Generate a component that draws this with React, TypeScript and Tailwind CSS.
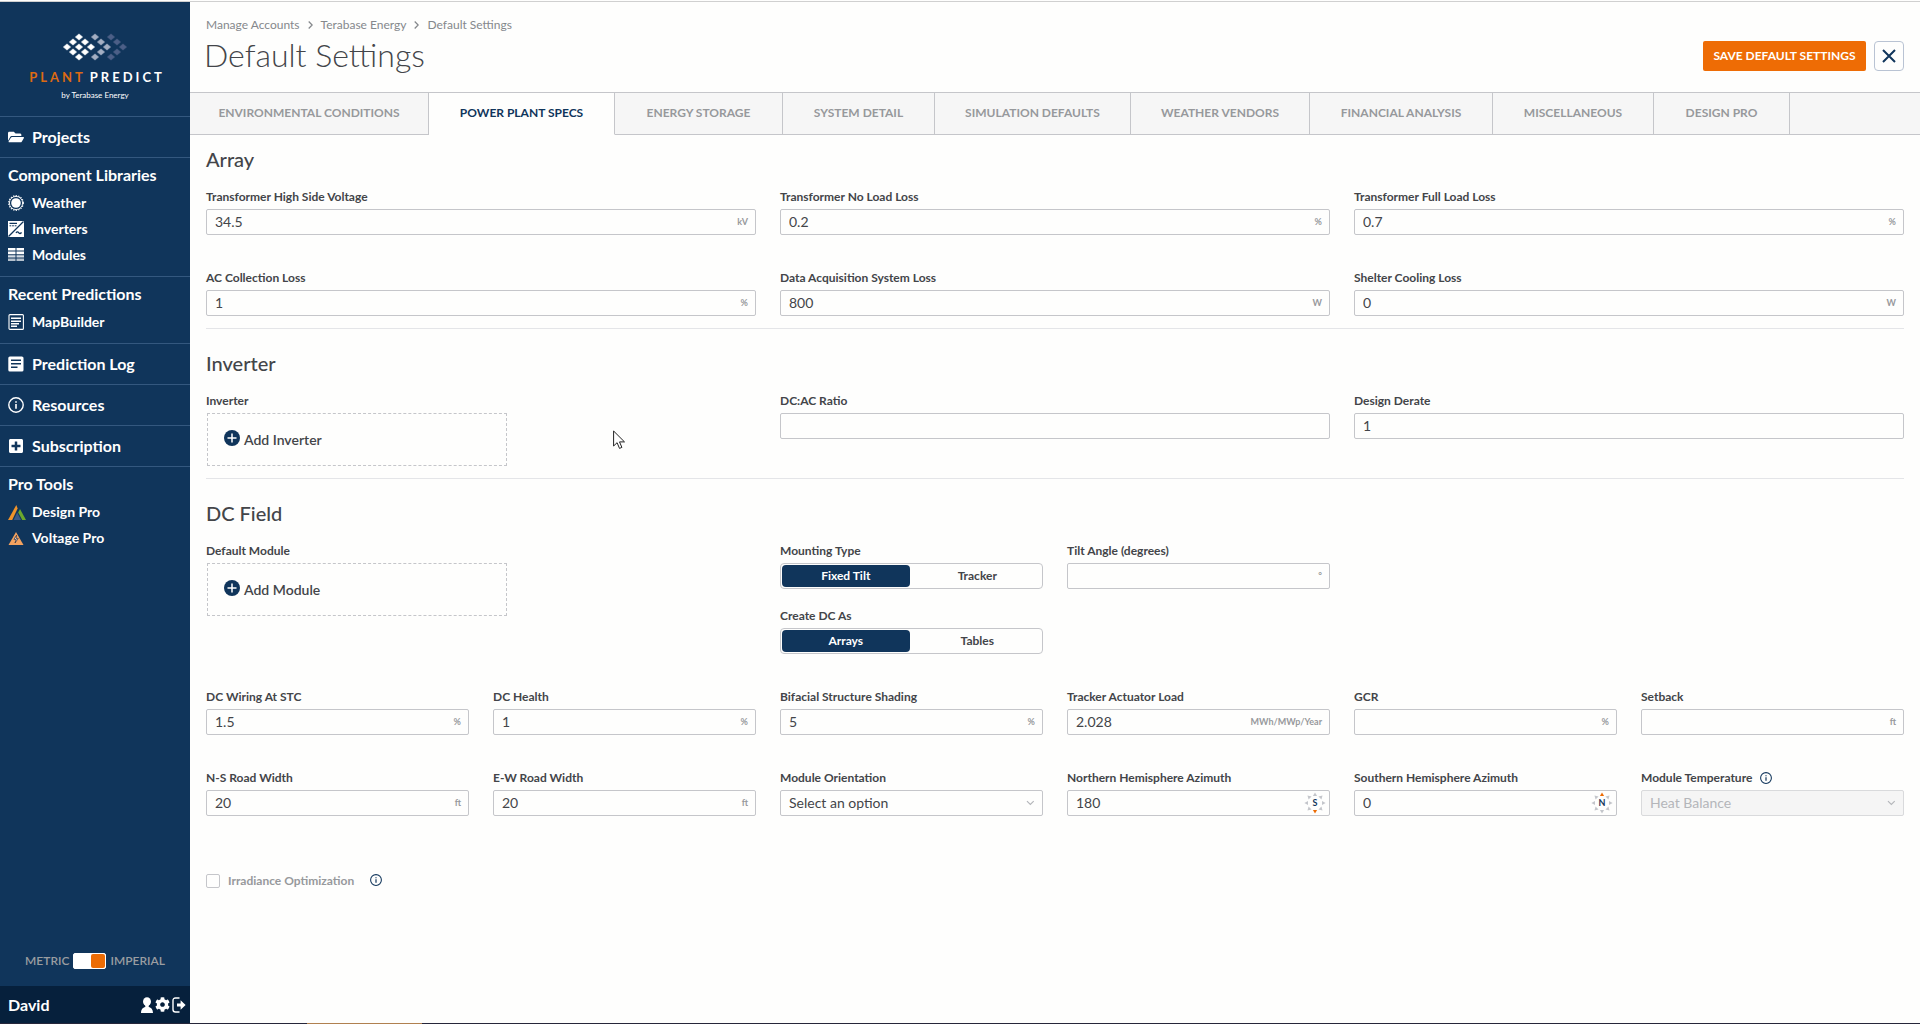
import { useId, useState } from 'react';
import type { ReactNode } from 'react';
import { FaCog, FaFolderOpen, FaPlusSquare } from 'react-icons/fa';

const Logo = () => {
  const white = [[15, 0], [9, 5], [21, 5], [3, 10], [15, 10], [27, 10], [9, 15], [21, 15], [15, 20]];
  const light = [[31, 0], [37, 5], [43, 10], [37, 15], [31, 20]];
  const dim = [[47, 0], [53, 5], [59, 10], [53, 15], [47, 20]];
  const diamond = ([x, y]: number[]) => (
    <path key={`${x}-${y}`} d={`M${x - 3.6} ${y + 4}l3.6 -3.1l3.6 3.1l-3.6 3.1z`} strokeWidth="0.6" strokeLinejoin="round" />
  );
  return (
    <svg width="64" height="28" viewBox="-1 0 64 28" aria-hidden="true">
      <g fill="#4c5f87" stroke="#4c5f87">{dim.map(diamond)}</g>
      <g fill="#a3aec2" stroke="#a3aec2">{light.map(diamond)}</g>
      <g fill="#fff" stroke="#fff">{white.map(diamond)}</g>
    </svg>
  );
};

const WeatherIcon = () => (
  <svg width="16" height="16" viewBox="0 0 16 16" fill="none" stroke="white" aria-hidden="true">
    <circle cx="8" cy="8" r="4.8" fill="white" stroke="none" />
    <circle cx="8" cy="8" r="6.6" strokeWidth="0.9" />
    <circle cx="8" cy="8" r="7.3" strokeWidth="1.2" strokeDasharray="1.3 1.3" />
  </svg>
);

const InverterIcon = () => (
  <svg width="16" height="16" viewBox="0 0 16 16" aria-hidden="true">
    <rect width="16" height="16" fill="white" />
    <path d="M0.5 15.5L15.5 0.5M1.5 2.3h7.5M8 12c1-1.6 2-1.2 2.8-.2s2 1 2.7-.4" stroke="#10355b" strokeWidth="1.3" fill="none" />
    <path d="M1.5 4.8h7" stroke="#10355b" strokeDasharray="1.8 0.8" />
  </svg>
);

const ModulesIcon = () => (
  <svg width="16" height="14" viewBox="0 0 16 14" aria-hidden="true">
    <path d="M0 0h7.5v2.6H0zM8.5 0H16v2.6H8.5zM0 3.6h7.5v2.6H0zM8.5 3.6H16v2.6H8.5z" fill="white" />
    <path d="M0 7.2h7.5v2.4H0zM8.5 7.2H16v2.4H8.5z" fill="#d5dde5" />
    <path d="M0 10.6h7.5V13H0zM8.5 10.6H16V13H8.5z" fill="#b5c1cd" />
  </svg>
);

const PredictionIcon = () => (
  <svg width="16" height="16" viewBox="0 0 16 16" fill="none" stroke="white" aria-hidden="true">
    <rect x="1" y="0.6" width="14.4" height="14.8" rx="1" strokeWidth="1.1" />
    <path d="M3 4.2h10M3 7.2h10M3 9.8h8M3 12.2h6" strokeWidth="1.5" />
  </svg>
);

const LogIcon = () => (
  <svg width="16" height="16" viewBox="0 0 16 16" aria-hidden="true">
    <rect x="0.3" y="0.5" width="15.2" height="15" rx="1.6" fill="white" />
    <path d="M3 4.3h10M3 7.7h10M3 11.2h6.5" stroke="#10355b" strokeWidth="1.6" />
  </svg>
);

const InfoIcon = ({ className }: { className: string }) => (
  <svg viewBox="0 0 16 16" fill="none" stroke="currentColor" className={className} aria-hidden="true">
    <circle cx="8" cy="8" r="7.2" strokeWidth="1.4" />
    <path d="M8 7v4.8M8 4.2v1.6" strokeWidth="1.6" />
  </svg>
);

const DesignProIcon = () => (
  <svg width="18" height="15" viewBox="0 0 18 15" aria-hidden="true">
    <path d="M8.3 0L9.6 3.6L4.2 15H0z" fill="#f0932b" />
    <path d="M12 4l6 11h-3.8L10.2 7.5z" fill="#6ba82d" />
    <path d="M9.2 7.4L13 15H5.6z" fill="#3a5a86" />
  </svg>
);

const VoltageProIcon = () => (
  <svg width="16" height="13" viewBox="0 0 16 13" aria-hidden="true">
    <path d="M8 0L15.5 13H0.5z" fill="#f3a25f" />
    <path d="M8.6 3.2L6 7.4h2.2L7 11l3.2-4.6H8z" fill="#fff" stroke="#3d3a45" strokeWidth="0.8" />
  </svg>
);

const UserIcon = () => (
  <svg width="12" height="16" viewBox="0 0 12 16" fill="white" aria-hidden="true">
    <ellipse cx="6" cy="4.6" rx="4" ry="4.4" />
    <path d="M4.3 8h3.4v2C10.3 10.8 11.8 12.2 12 16H0c.2-3.8 1.7-5.2 4.3-6z" />
  </svg>
);

const SignOutIcon = () => (
  <svg width="14" height="16" viewBox="0 0 14 16" aria-hidden="true">
    <path d="M7.5 1H3.5Q1 1 1 3.5v9Q1 15 3.5 15h4" fill="none" stroke="white" strokeWidth="1.4" />
    <path d="M5 6.4h3.6V3.2L13.6 8l-5 4.8V9.6H5z" fill="white" />
  </svg>
);

const PlusIcon = () => (
  <svg width="16" height="16" viewBox="0 0 16 16" aria-hidden="true" className="mb-1">
    <circle cx="8" cy="8" r="8" fill="#10355b" />
    <path d="M8 3.5v9M3.5 8h9" stroke="white" strokeWidth="1.5" />
  </svg>
);

const Compass = ({ point }: { point: 'N' | 'S' }) => (
  <svg width="22" height="22" viewBox="0 0 22 22" className="-mr-1" aria-hidden="true">
    {[0, 45, 90, 135, 180, 225, 270, 315].map((deg) => (
      <path
        key={deg}
        d="M11 0.4l2.1 3.6H8.9z"
        fill={deg === (point === 'N' ? 0 : 180) ? '#ec6c05' : '#c4c6cb'}
        transform={`rotate(${deg} 11 11)`}
      />
    ))}
    <text x="11" y="14" textAnchor="middle" fontSize="9" fontWeight="700" fill="#10355b">{point}</text>
  </svg>
);

const Chevron = () => (
  <svg width="9" height="6" viewBox="0 0 9 6" fill="none" stroke="#b4b6ba" strokeWidth="1.2" aria-hidden="true">
    <path d="M1 1l3.5 3.5L8 1" />
  </svg>
);

const Crumb = () => (
  <svg width="5" height="8" viewBox="0 0 5 8" fill="none" stroke="currentColor" strokeWidth="1.3" aria-hidden="true">
    <path d="M0.7 0.5L4.2 4L0.7 7.5" />
  </svg>
);

const SidebarLink = ({ icon, children }: { icon: ReactNode; children: ReactNode }) => (
  <li>
    <a href="#" className="flex h-[26px] items-center text-sm font-bold">
      <span className="flex w-6 shrink-0">{icon}</span>
      {children}
    </a>
  </li>
);

const SidebarMain = ({ icon, children }: { icon: ReactNode; children: ReactNode }) => (
  <a href="#" className="flex h-[41px] items-center border-t border-[#34587f] px-2 text-base font-bold">
    <span className="flex w-6 shrink-0">{icon}</span>
    {children}
  </a>
);

const SidebarGroup = ({ title, children }: { title: string; children: ReactNode }) => (
  <section className="border-t border-[#34587f] px-2 pt-[7px] pb-2">
    <h2 className="h-[25px] text-base leading-5 font-bold">{title}</h2>
    <ul>{children}</ul>
  </section>
);

const Sidebar = () => {
  const [imperial, setImperial] = useState(true);
  return (
    <aside className="flex w-[190px] shrink-0 flex-col bg-[#10355b] text-white">
      <div className="flex h-[114px] flex-col items-center pt-[31px]">
        <Logo />
        <p className="mt-1.5 flex gap-1 text-[13px] leading-5 font-bold tracking-[3px]">
          <span className="text-[#dd6a12]">PLANT</span>
          <span className="-mr-1">PREDICT</span>
        </p>
        <p className="mt-0.5 text-[8px] leading-3">by Terabase Energy</p>
      </div>
      <nav aria-label="Main">
        <SidebarMain icon={<FaFolderOpen size={16} />}>Projects</SidebarMain>
        <SidebarGroup title="Component Libraries">
          <SidebarLink icon={<WeatherIcon />}>Weather</SidebarLink>
          <SidebarLink icon={<InverterIcon />}>Inverters</SidebarLink>
          <SidebarLink icon={<ModulesIcon />}>Modules</SidebarLink>
        </SidebarGroup>
        <SidebarGroup title="Recent Predictions">
          <SidebarLink icon={<PredictionIcon />}>MapBuilder</SidebarLink>
        </SidebarGroup>
        <SidebarMain icon={<LogIcon />}>Prediction Log</SidebarMain>
        <SidebarMain icon={<InfoIcon className="size-4" />}>Resources</SidebarMain>
        <SidebarMain icon={<FaPlusSquare size={16} />}>Subscription</SidebarMain>
        <SidebarGroup title="Pro Tools">
          <SidebarLink icon={<DesignProIcon />}>Design Pro</SidebarLink>
          <SidebarLink icon={<VoltageProIcon />}>Voltage Pro</SidebarLink>
        </SidebarGroup>
      </nav>
      <label className="mt-auto flex h-[50px] items-center justify-center gap-1 text-xs font-semibold text-[#9a9da1]">
        METRIC
        <input
          type="checkbox"
          role="switch"
          aria-label="Use imperial units"
          checked={imperial}
          onChange={(e) => setImperial(e.target.checked)}
          className="h-4 w-[33px] appearance-none rounded-xs border border-white bg-white before:block before:size-[14px] before:rounded-xs before:bg-[#ec6c05] checked:before:ml-[17px]"
        />
        IMPERIAL
      </label>
      <div className="flex h-[37px] items-center bg-[#06203c] px-2 text-base font-bold">
        <span className="flex-1">David</span>
        <div className="-mr-1 flex items-center gap-0.5">
          <button aria-label="Profile"><UserIcon /></button>
          <button aria-label="Settings"><FaCog size={15} /></button>
          <button aria-label="Sign out"><SignOutIcon /></button>
        </div>
      </div>
    </aside>
  );
};

const tabs = [
  { name: 'ENVIRONMENTAL CONDITIONS', width: 'w-[239px]' },
  { name: 'POWER PLANT SPECS', width: 'w-[186px]' },
  { name: 'ENERGY STORAGE', width: 'w-[168px]' },
  { name: 'SYSTEM DETAIL', width: 'w-[152px]' },
  { name: 'SIMULATION DEFAULTS', width: 'w-[196px]' },
  { name: 'WEATHER VENDORS', width: 'w-[179px]' },
  { name: 'FINANCIAL ANALYSIS', width: 'w-[183px]' },
  { name: 'MISCELLANEOUS', width: 'w-[161px]' },
  { name: 'DESIGN PRO', width: 'w-[136px]' },
];

const Tabs = () => {
  const [active, setActive] = useState('POWER PLANT SPECS');
  return (
    <div role="tablist" className="flex h-[43px] border-t border-[#c5c6ca] bg-[#f6f6f6]">
      {tabs.map(({ name, width }) => (
        <button
          key={name}
          role="tab"
          aria-selected={name === active}
          onClick={() => setActive(name)}
          className={`${width} border-r border-b border-r-[#c5c6ca] pb-0.5 text-xs font-bold whitespace-nowrap ${
            name === active ? 'border-b-[#fefefd] bg-[#fefefd] text-[#10355b]' : 'border-b-[#c5c6ca] text-[#97999c]'
          }`}
        >
          {name}
        </button>
      ))}
      <div className="flex-1 border-b border-[#c5c6ca]" />
    </div>
  );
};

type FieldProps = { label: string; value?: string; unit?: ReactNode };

const Field = ({ label, value = '', unit }: FieldProps) => {
  const id = useId();
  return (
    <div>
      <label htmlFor={id} className="block text-xs leading-6 font-bold">{label}</label>
      <div className="flex h-[26px] items-center rounded-xs border border-[#c5c6ca] pr-[7px] pl-2">
        <input id={id} defaultValue={value} className="w-full min-w-0 bg-transparent text-sm outline-none" />
        <span className="shrink-0 text-[9px] font-bold text-[#97999c]">{unit}</span>
      </div>
    </div>
  );
};

const SelectField = ({ label, option, info, disabled }: { label: string; option: string; info?: boolean; disabled?: boolean }) => {
  const id = useId();
  return (
    <div>
      <div className="flex items-center gap-2">
        <label htmlFor={id} className="text-xs leading-6 font-bold">{label}</label>
        {info && <InfoIcon className="size-3 text-[#10355b]" />}
      </div>
      <div className={`flex h-[26px] items-center rounded-xs border pr-[7px] pl-2 ${disabled ? 'border-[#d9dadc] bg-[#f5f5f5]' : 'border-[#c5c6ca]'}`}>
        <select id={id} disabled={disabled} className="w-full appearance-none bg-transparent text-sm outline-none disabled:text-[#b4b6ba]">
          <option>{option}</option>
        </select>
        <Chevron />
      </div>
    </div>
  );
};

const Toggle = ({ label, options }: { label: string; options: string[] }) => {
  const name = useId();
  return (
    <fieldset>
      <legend className="text-xs leading-6 font-bold">{label}</legend>
      <div className="grid h-[26px] grid-cols-2 gap-1 rounded-sm border border-[#c5c6ca] p-px">
        {options.map((option, i) => (
          <label key={option} className="flex items-center justify-center rounded-sm text-xs font-bold has-checked:bg-[#10355b] has-checked:text-white">
            <input type="radio" name={name} defaultChecked={i === 0} className="sr-only" />
            {option}
          </label>
        ))}
      </div>
    </fieldset>
  );
};

const AddBox = ({ label, action }: { label: string; action: string }) => (
  <div>
    <p className="text-xs leading-6 font-bold">{label}</p>
    <button className="ml-px flex h-[53px] w-[300px] items-center gap-1 border border-dashed border-[#c5c6ca] px-4 text-sm font-semibold">
      <PlusIcon />
      {action}
    </button>
  </div>
);

const SectionTitle = ({ children }: { children: ReactNode }) => (
  <h2 className="mb-[11px] text-xl leading-[30px] font-medium">{children}</h2>
);

const Cursor = () => (
  <svg width="13" height="20" viewBox="0 0 13 20" className="pointer-events-none absolute top-[429px] left-[613px]" aria-hidden="true">
    <path d="M0.6 1v15l3.5-3.3 2.4 5.7 2.4-1-2.4-5.5h5z" fill="white" stroke="#222" />
  </svg>
);

const App: React.FC = () => {
  return (
    <div className="relative flex min-h-screen flex-col border-t border-[#fefefd] bg-[#fefefd] font-[Lato,sans-serif] text-[#434549]">
      <div className="flex flex-1 border-t border-[#d0d0d0]">
        <Sidebar />
        <main className="min-w-0 flex-1">
          <header className="flex h-[90px] items-start justify-between px-4">
            <div>
              <nav aria-label="Breadcrumb" className="mt-[13px] flex items-center gap-2 text-xs leading-5 text-[#85888c]">
                <a href="#">Manage Accounts</a>
                <Crumb />
                <a href="#">Terabase Energy</a>
                <Crumb />
                <a href="#">Default Settings</a>
              </nav>
              <h1 className="-ml-0.5 text-[32px] leading-10 font-light">Default Settings</h1>
            </div>
            <div className="mt-[39px] flex gap-2">
              <button className="h-[30px] w-[163px] rounded-xs bg-[#ee6c05] text-xs font-bold whitespace-nowrap text-white">
                SAVE DEFAULT SETTINGS
              </button>
              <button aria-label="Close" className="flex h-[30px] w-[30px] items-center justify-center rounded-sm border border-[#b9c3d3]">
                <svg width="14" height="14" viewBox="0 0 14 14" stroke="#10355b" strokeWidth="2" aria-hidden="true">
                  <path d="M1 1l12 12M13 1L1 13" />
                </svg>
              </button>
            </div>
          </header>
          <Tabs />
          <form className="px-4 pt-[9px] pb-8">
            <SectionTitle>Array</SectionTitle>
            <div className="grid grid-cols-3 gap-x-6 gap-y-[31px] border-b border-[#e4e5e8] pb-3">
              <Field label="Transformer High Side Voltage" value="34.5" unit="kV" />
              <Field label="Transformer No Load Loss" value="0.2" unit="%" />
              <Field label="Transformer Full Load Loss" value="0.7" unit="%" />
              <Field label="AC Collection Loss" value="1" unit="%" />
              <Field label="Data Acquisition System Loss" value="800" unit="W" />
              <Field label="Shelter Cooling Loss" value="0" unit="W" />
            </div>

            <div className="h-[19px]" />
            <SectionTitle>Inverter</SectionTitle>
            <div className="grid grid-cols-3 gap-x-6 border-b border-[#e4e5e8] pb-3">
              <AddBox label="Inverter" action="Add Inverter" />
              <Field label="DC:AC Ratio" />
              <Field label="Design Derate" value="1" />
            </div>

            <div className="h-[19px]" />
            <SectionTitle>DC Field</SectionTitle>
            <div className="grid grid-cols-6 gap-x-6 gap-y-[31px]">
              <div className="col-span-2">
                <AddBox label="Default Module" action="Add Module" />
              </div>
              <div className="flex flex-col gap-[15px]">
                <Toggle label="Mounting Type" options={['Fixed Tilt', 'Tracker']} />
                <Toggle label="Create DC As" options={['Arrays', 'Tables']} />
              </div>
              <div className="col-span-3 grid grid-cols-3 gap-x-6">
                <Field label="Tilt Angle (degrees)" unit="°" />
              </div>
              <Field label="DC Wiring At STC" value="1.5" unit="%" />
              <Field label="DC Health" value="1" unit="%" />
              <Field label="Bifacial Structure Shading" value="5" unit="%" />
              <Field label="Tracker Actuator Load" value="2.028" unit="MWh/MWp/Year" />
              <Field label="GCR" unit="%" />
              <Field label="Setback" unit="ft" />
              <Field label="N-S Road Width" value="20" unit="ft" />
              <Field label="E-W Road Width" value="20" unit="ft" />
              <SelectField label="Module Orientation" option="Select an option" />
              <Field label="Northern Hemisphere Azimuth" value="180" unit={<Compass point="S" />} />
              <Field label="Southern Hemisphere Azimuth" value="0" unit={<Compass point="N" />} />
              <SelectField label="Module Temperature" option="Heat Balance" info disabled />
            </div>

            <div className="mt-[53px] flex h-6 items-center">
              <input id="irradiance" type="checkbox" className="size-[14px] appearance-none rounded-xs border border-[#c5c6ca]" />
              <label htmlFor="irradiance" className="ml-2 text-xs font-bold text-[#97999c]">Irradiance Optimization</label>
              <InfoIcon className="mb-0.5 ml-4 size-3 text-[#10355b]" />
            </div>
          </form>
        </main>
      </div>
      <div className="flex h-px bg-[#26263a]">
        <div className="ml-[16%] w-[6%] bg-[#b08050]" />
      </div>
      <Cursor />
    </div>
  );
};

export default App;
